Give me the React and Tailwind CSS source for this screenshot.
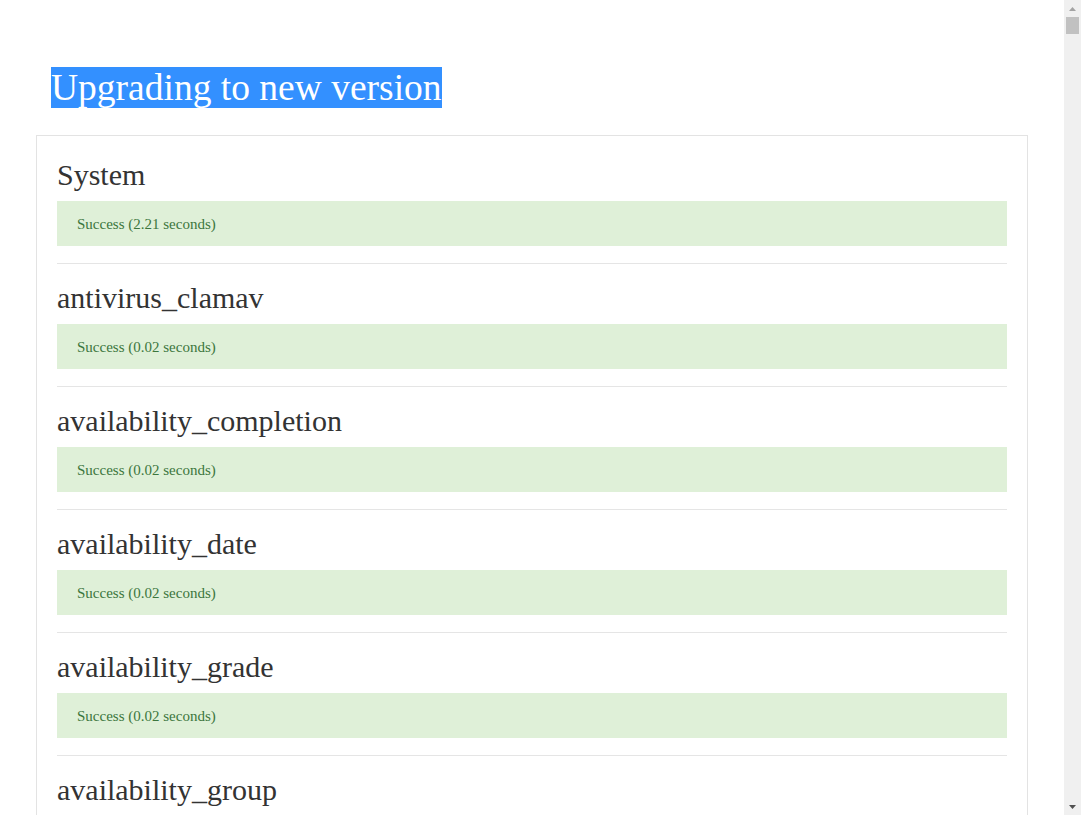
import React from 'react';

const results = [
  { name: 'System', time: '2.21' },
  { name: 'antivirus_clamav', time: '0.02' },
  { name: 'availability_completion', time: '0.02' },
  { name: 'availability_date', time: '0.02' },
  { name: 'availability_grade', time: '0.02' },
  { name: 'availability_group', time: '0.02' },
  { name: 'availability_grouping', time: '0.02' },
  { name: 'availability_profile', time: '0.02' },
];

const UpgradeResult = ({ name, time, last }) => (
  <div>
    <h3 className="mt-[17px] mb-[10px] text-[30px] leading-[33px] font-normal text-[#333]">{name}</h3>
    <div className="bg-[#dff0d8] text-[#3c763d] text-[15px] leading-[20px] px-[20px] py-[12.5px]">
      Success ({time} seconds)
    </div>
    {!last && <hr className="mt-[17px] border-0 border-t border-[#e5e5e5]" />}
  </div>
);

// fake window scrollbar, the page is scrolled to the top
const Scrollbar = () => (
  <div className="w-[17px] h-full bg-[#f0f0f0] flex flex-col items-center shrink-0">
    <div className="h-[17px] flex items-center justify-center">
      <svg width="7" height="4" viewBox="0 0 7 4"><path d="M3.5 0L7 4H0z" fill="#a3a3a3" /></svg>
    </div>
    <div className="w-[13px] h-[17px] bg-[#c1c1c1]" />
    <div className="flex-1" />
    <div className="h-[17px] flex items-center justify-center">
      <svg width="7" height="4" viewBox="0 0 7 4"><path d="M0 0H7L3.5 4z" fill="#505050" /></svg>
    </div>
  </div>
);

export default function App() {
  return (
    <div className="h-screen flex overflow-hidden bg-white font-['Liberation_Serif',serif]">
      <div className="flex-1 overflow-hidden px-[36px] pt-[68px]">
        <h2 className="pl-[15px] text-[37.5px] leading-[40px] font-normal mb-[27px]">
          <span className="bg-[#3390ff] text-white">Upgrading to new version</span>
        </h2>
        <div className="border border-[#e3e3e3] px-[20px] pt-[5px] pb-[20px]">
          {results.map((r, i) => (
            <UpgradeResult key={r.name} {...r} last={i === results.length - 1} />
          ))}
        </div>
      </div>
      <Scrollbar />
    </div>
  );
}
